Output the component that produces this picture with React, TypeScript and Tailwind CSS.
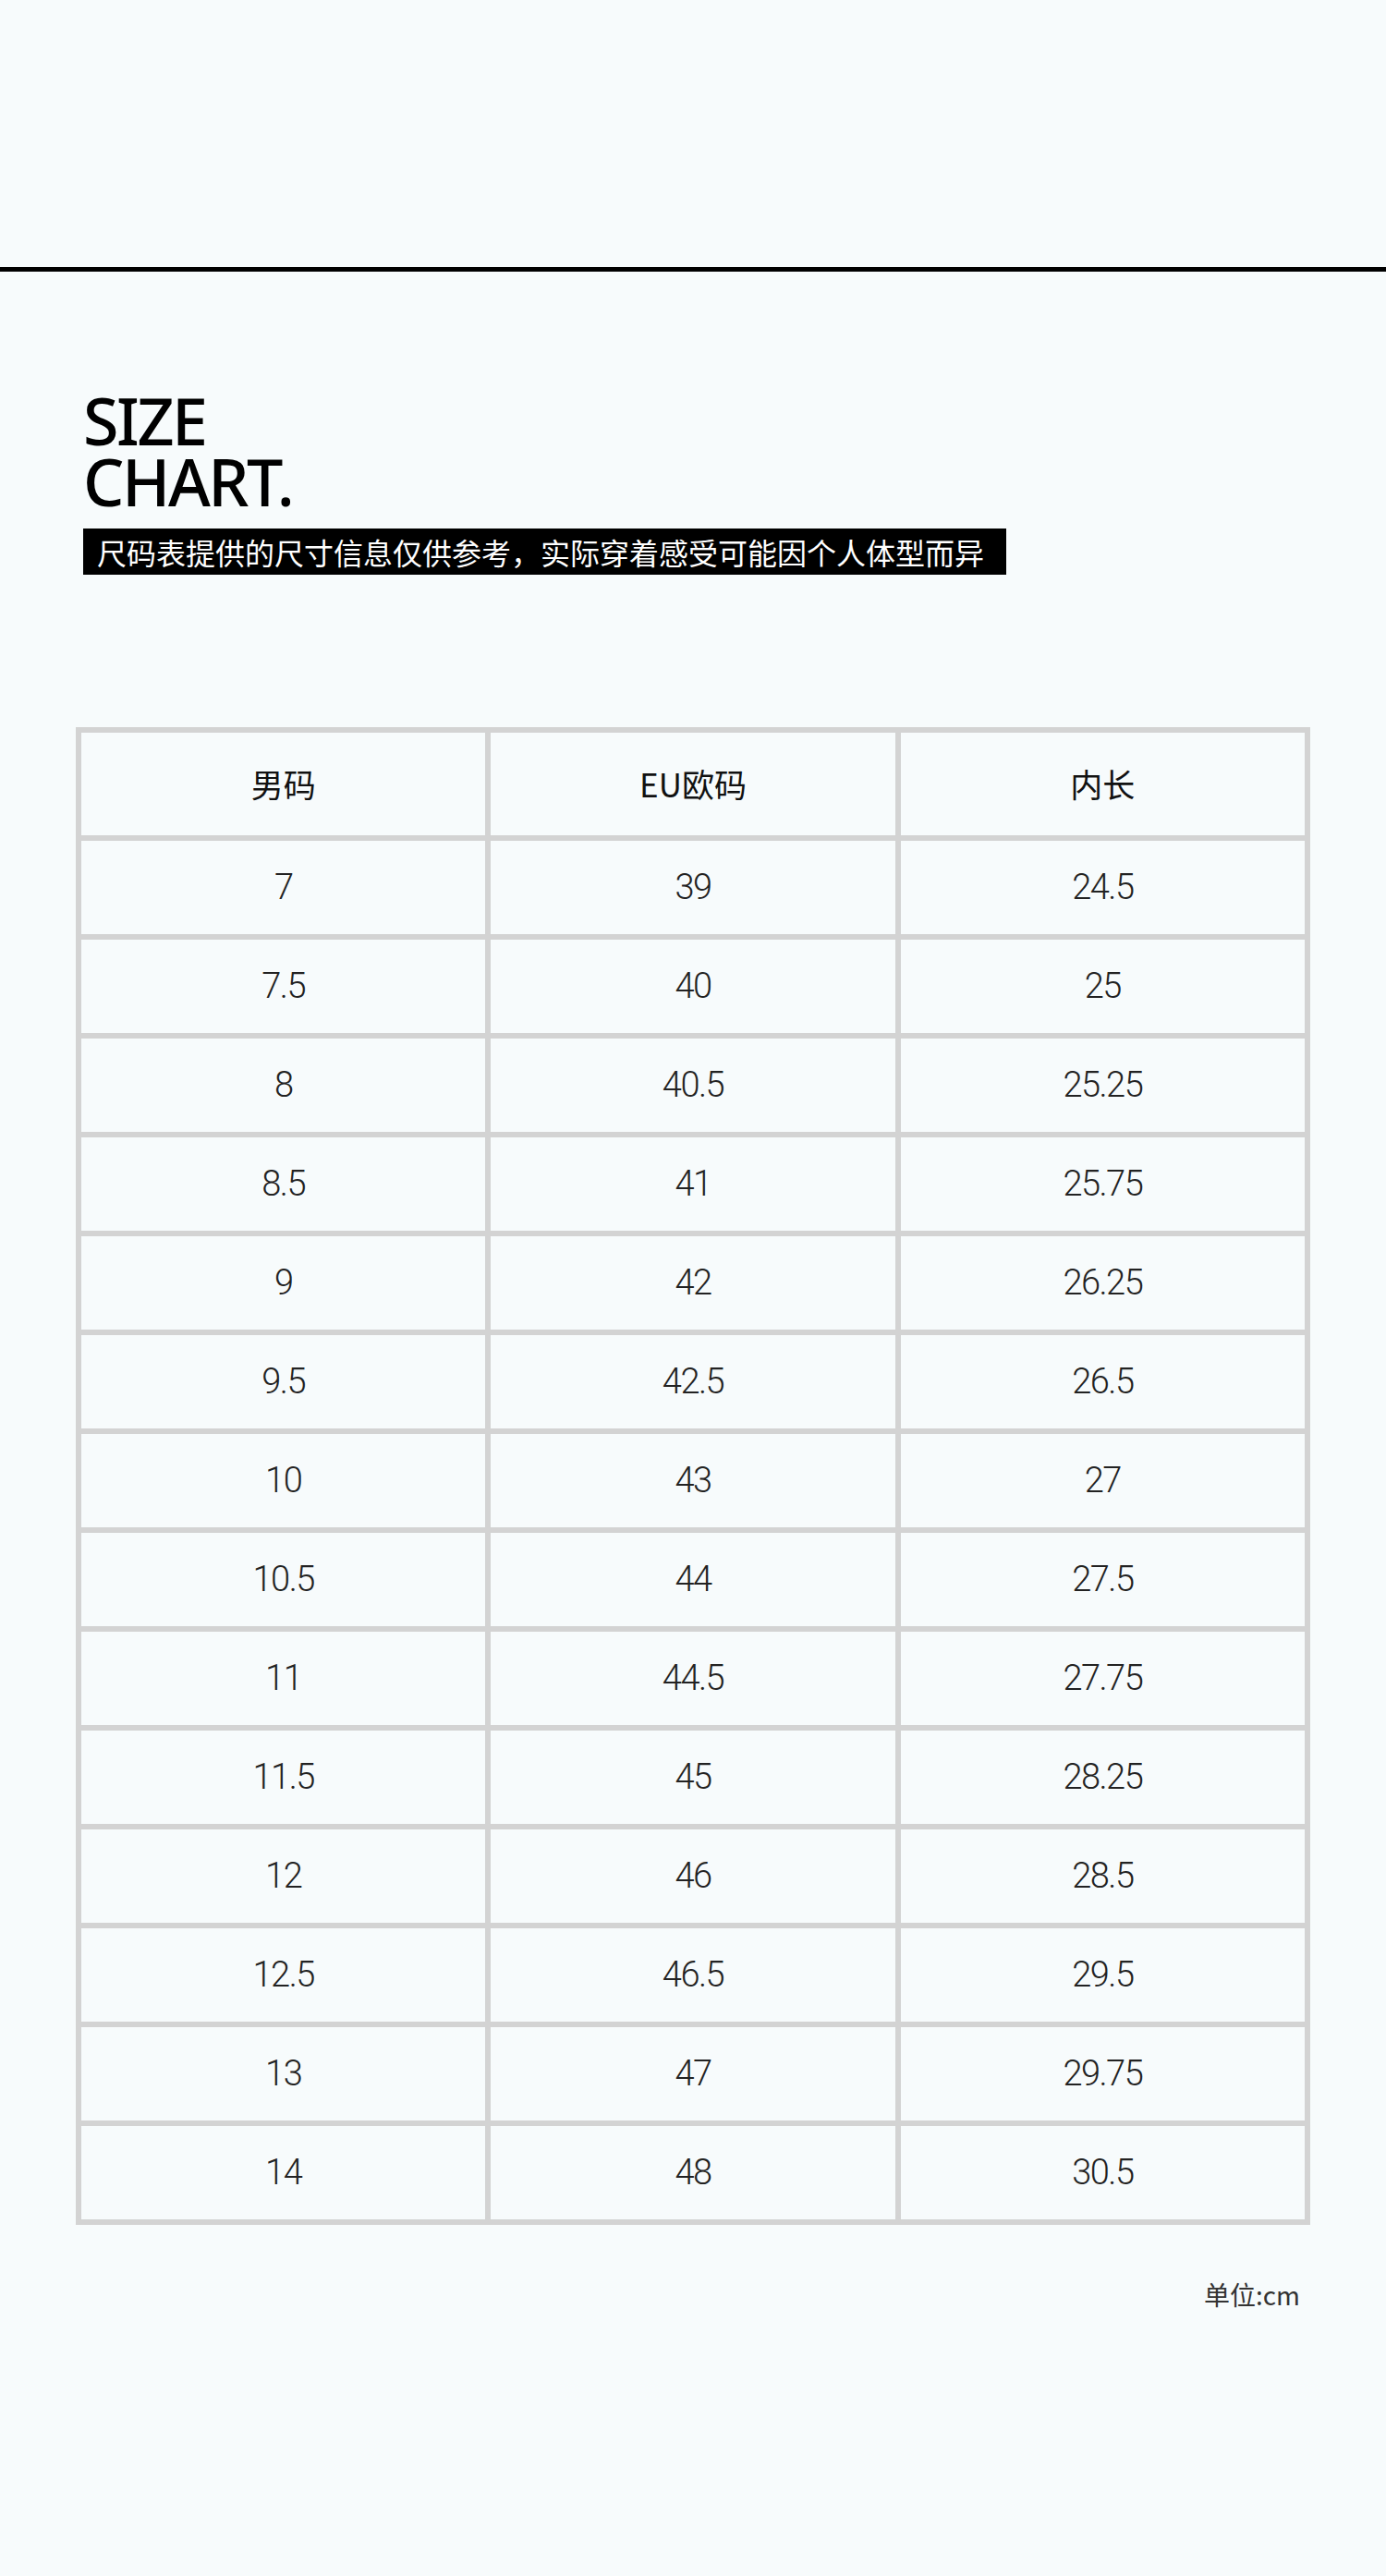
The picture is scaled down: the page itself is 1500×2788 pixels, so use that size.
const rows: [string, string, string][] = [
  ['7', '39', '24.5'],
  ['7.5', '40', '25'],
  ['8', '40.5', '25.25'],
  ['8.5', '41', '25.75'],
  ['9', '42', '26.25'],
  ['9.5', '42.5', '26.5'],
  ['10', '43', '27'],
  ['10.5', '44', '27.5'],
  ['11', '44.5', '27.75'],
  ['11.5', '45', '28.25'],
  ['12', '46', '28.5'],
  ['12.5', '46.5', '29.5'],
  ['13', '47', '29.75'],
  ['14', '48', '30.5'],
];

const cjk = { fontFamily: '"Noto Sans CJK SC", "Noto Sans", sans-serif' };

export default function App() {
  return (
    <div className="min-h-[2788px] bg-[#f7fbfc]" style={cjk}>
      <div className="h-[289px]" />
      <div className="h-[5px] bg-black" />

      <div className="pl-[90px] pt-[128px]">
        <h1
          className="text-[70px] leading-[66px] font-medium tracking-[-0.035em] text-black"
          style={{ fontFamily: '"Noto Sans", sans-serif' }}
        >
          SIZE
          <br />
          CHART.
        </h1>
        <div className="mt-[18px] flex h-[50px] w-[999px] items-center bg-black pl-[15px] text-[32px] leading-none text-white">
          尺码表提供的尺寸信息仅供参考，实际穿着感受可能因个人体型而异
        </div>
      </div>

      <div className="mt-[165px] px-[82px]">
        <div className="grid grid-cols-3 gap-[6px] bg-[#d3d3d3] p-[6px]">
          {['男码', 'EU欧码', '内长'].map(h => (
            <div key={h} className="flex h-[111px] items-center justify-center bg-[#f7fbfc] text-[35px] text-[#111]">
              {h}
            </div>
          ))}
          {rows.map((r, i) =>
            r.map((v, j) => (
              <div
                key={`${i}-${j}`}
                className="flex h-[101px] items-center justify-center bg-[#f7fbfc] text-[38px] font-light tracking-[-0.04em] text-[#222]"
                style={{ fontFamily: 'Roboto, "Liberation Sans", sans-serif' }}
              >
                {v}
              </div>
            ))
          )}
        </div>
        <div className="mt-[61px] pr-[11px] text-right text-[28px] leading-none text-[#333]">单位:cm</div>
      </div>
    </div>
  );
}
